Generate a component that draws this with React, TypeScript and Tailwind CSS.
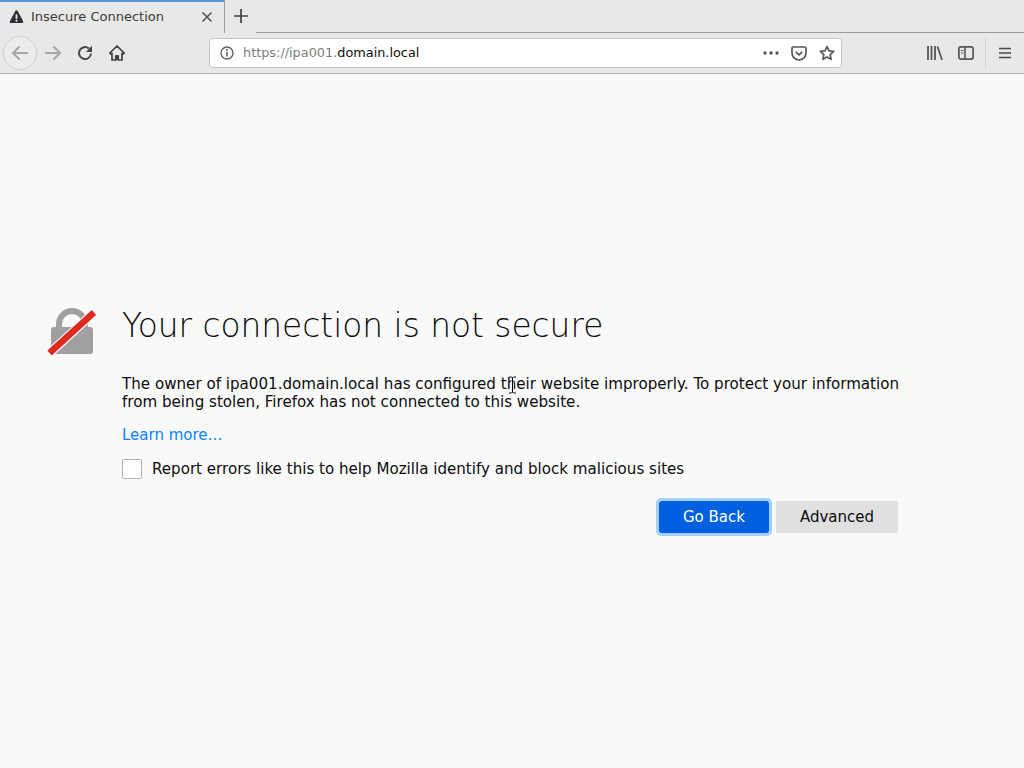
const font = "font-['DejaVu_Sans',sans-serif]"

function TabBar() {
  return (
    <div className="flex h-[33px] bg-[#e8e8e7]">
      <div className="flex w-[225px] h-[33px] items-center bg-[#e8e8e7] border-t-2 border-t-[#5b93d8] border-r border-r-[#9c9c9c] pl-[9px] pr-[11px] pb-[2px]">
        <svg width="15" height="15" viewBox="0 0 16 16" className="shrink-0">
          <path d="M8 1.200c-.6 0-1 .3-1.300.8L.9 13c-.5 1 .2 2 1.200 2h11.800c1 0 1.700-1 1.200-2L9.300 2C9 1.500 8.600 1.200 8 1.200z" fill="#2b2e33" />
          <rect x="7" y="5.500" width="2" height="5" rx=".6" fill="#e8e8e7" />
          <circle cx="8" cy="12.400" r="1.100" fill="#e8e8e7" />
        </svg>
        <span className="ml-[7px] text-[13px] text-[#3a3a3c] whitespace-nowrap">Insecure Connection</span>
        <svg width="12" height="12" viewBox="0 0 12 12" className="ml-auto">
          <path d="M1.500 1.500l9 9M10.500 1.500l-9 9" stroke="#55575a" strokeWidth="1.600" />
        </svg>
      </div>
      <div className="flex w-[31px] items-center justify-center pb-[2px]">
        <svg width="14" height="14" viewBox="0 0 14 14">
          <path d="M7 0v14M0 7h14" stroke="#3f4145" strokeWidth="1.700" />
        </svg>
      </div>
      <div className="flex-1 border-b border-b-[#9c9c9c]" />
    </div>
  )
}

function NavBar() {
  return (
    <div className="flex h-[41px] items-center bg-[#e8e8e7] border-b border-b-[#b5b5b5]">
      <div className="ml-[3px] flex h-[34px] w-[34px] items-center justify-center rounded-full border border-[#cfcfcf] bg-[#ececeb]">
        <svg width="18" height="16" viewBox="0 0 18 16">
          <path d="M17 8H2M8.500 1.500L2 8l6.500 6.500" fill="none" stroke="#a5a6a8" strokeWidth="2" />
        </svg>
      </div>
      <div className="ml-[7px] flex w-[18px] justify-center">
        <svg width="18" height="16" viewBox="0 0 18 16">
          <path d="M1 8h15M9.500 1.500L16 8l-6.500 6.500" fill="none" stroke="#a5a6a8" strokeWidth="2" />
        </svg>
      </div>
      <div className="ml-[15px] flex w-[16px] justify-center">
        <svg width="16" height="16" viewBox="0 0 16 16">
          <path d="M14 8.500A6 6 0 1 1 11.800 3.400" fill="none" stroke="#45474b" strokeWidth="2" />
          <path d="M15 .8v6.200H8.800z" fill="#45474b" />
        </svg>
      </div>
      <div className="ml-[16px] flex w-[16px] justify-center">
        <svg width="16" height="16" viewBox="0 0 16 16">
          <path d="M8 1L.8 8l1.200 1.200L3 8.300V15h3.800v-4h2.400v4H13V8.300l1 .9L15.200 8z" fill="none" stroke="#3f4145" strokeWidth="1.700" strokeLinejoin="round" />
          <rect x="6.500" y="10" width="3" height="5" fill="#3f4145" />
        </svg>
      </div>
      <div className="ml-[84px] flex h-[30px] w-[633px] items-center rounded-[4px] border border-[#c4c4c4] bg-white pl-[9px] pr-[6px]">
        <svg width="16" height="16" viewBox="0 0 16 16">
          <circle cx="8" cy="8" r="6" fill="none" stroke="#5f6165" strokeWidth="1.400" />
          <rect x="7.200" y="7" width="1.600" height="4.500" fill="#5f6165" />
          <circle cx="8" cy="5" r="1" fill="#5f6165" />
        </svg>
        <span className="ml-[8px] text-[12.850px] text-[#7c7c7f] whitespace-nowrap">
          https://ipa001.<span className="text-[#0c0c0d]">domain.local</span>
        </span>
        <div className="ml-auto flex items-center">
          <svg width="16" height="4" viewBox="0 0 16 4">
            <circle cx="2" cy="2" r="1.700" fill="#55575a" />
            <circle cx="8" cy="2" r="1.700" fill="#55575a" />
            <circle cx="14" cy="2" r="1.700" fill="#55575a" />
          </svg>
          <svg width="16" height="15" viewBox="0 0 16 15" className="ml-[12px]">
            <path d="M2.200 1h11.600c.7 0 1.200.5 1.200 1.200V7a7 7 0 0 1-14 0V2.200C1 1.500 1.500 1 2.200 1z" fill="none" stroke="#55575a" strokeWidth="1.700" />
            <path d="M4.800 5.800L8 8.800l3.200-3" fill="none" stroke="#55575a" strokeWidth="1.800" />
          </svg>
          <svg width="16" height="16" viewBox="0 0 16 16" className="ml-[12px]">
            <path d="M8 1.500l2 4.300 4.700.6-3.500 3.200.9 4.700L8 12l-4.100 2.300.9-4.700L1.300 6.400 6 5.800z" fill="none" stroke="#55575a" strokeWidth="1.700" strokeLinejoin="round" />
          </svg>
        </div>
      </div>
      <div className="ml-[85px] flex items-center">
        <svg width="16" height="14" viewBox="0 0 16 14">
          <path d="M1 0v14M4.500 0v14M8 0v14" stroke="#55575a" strokeWidth="1.800" />
          <path d="M10.500 .5L15 14" stroke="#55575a" strokeWidth="1.800" />
        </svg>
        <svg width="16" height="14" viewBox="0 0 16 14" className="ml-[15px]">
          <rect x=".9" y=".9" width="14.200" height="12.200" rx="2" fill="none" stroke="#55575a" strokeWidth="1.700" />
          <path d="M7 1v12" stroke="#55575a" strokeWidth="1.600" />
          <path d="M3 4.500h2.500M3 7h2.500" stroke="#55575a" strokeWidth="1" />
        </svg>
        <div className="ml-[11px] h-[32px] w-px bg-[#d2d2d2]" />
        <svg width="12" height="12" viewBox="0 0 12 12" className="ml-[13px]">
          <path d="M0 1.500h12M0 6h12M0 10.500h12" stroke="#45474b" strokeWidth="1.700" />
        </svg>
      </div>
    </div>
  )
}

function BrokenLock() {
  return (
    <svg width="50" height="50" viewBox="0 0 50 50" className="shrink-0">
      <path d="M10 20v-4a16 16 0 0 1 32 0v4h-6v-4a10 10 0 0 0-20 0v4z" fill="#a0a0a0" />
      <rect x="5" y="19" width="42" height="27" rx="3" fill="#a0a0a0" />
      <path d="M1 47.500L47 5.500" stroke="#f9f9fa" strokeWidth="9" />
      <path d="M3.500 45L48 4.500" stroke="#dc2a20" strokeWidth="6.500" />
    </svg>
  )
}

export default function App() {
  return (
    <div className={`relative h-[768px] w-[1024px] overflow-hidden bg-[#f9f9fa] ${font}`}>
      <TabBar />
      <NavBar />
      <main className="flex pl-[46px] pt-[233px]">
        <div className="pt-[1px]">
          <BrokenLock />
        </div>
        <div className="ml-[26px] w-[780px]">
          <h1 className="text-[32.800px] font-extralight leading-[38px] text-[#0c0c0d] whitespace-nowrap">Your connection is not secure</h1>
          <p className="mt-[30px] text-[15.120px] leading-[18px] text-[#0c0c0d]">
            The owner of ipa001.domain.local has configured their website improperly. To protect your information from being stolen, Firefox has not connected to this website.
          </p>
          <a className="mt-[15px] block text-[15px] leading-[18px] text-[#0a84ff]">Learn more…</a>
          <label className="mt-[15px] flex items-center">
            <span className="h-[20px] w-[20px] rounded-[2px] border border-[#b1b1b3] bg-white" />
            <span className="ml-[10px] text-[15.100px] leading-[18px] text-[#0c0c0d]">Report errors like this to help Mozilla identify and block malicious sites</span>
          </label>
          <div className="mt-[22px] mr-[4px] flex justify-end">
            <button className="h-[32px] w-[110px] rounded-[2px] bg-[#0060df] text-[15px] text-white outline-[3px] outline-offset-0 outline-[#a3cffc]">Go Back</button>
            <button className="ml-[7px] h-[32px] w-[122px] rounded-[2px] bg-[#e0e0e1] text-[15px] text-[#0c0c0d]">Advanced</button>
          </div>
        </div>
      </main>
      <svg width="9" height="18" viewBox="0 0 9 18" className="absolute left-[508px] top-[376px]">
        <path d="M1 1h2.500l1 1 1-1H8M4.500 2v14M1 17h2.500l1-1 1 1H8" fill="none" stroke="#fff" strokeWidth="2.200" opacity=".7" />
        <path d="M1 1h2.500l1 1 1-1H8M4.500 2v14M1 17h2.500l1-1 1 1H8" fill="none" stroke="#000" strokeWidth="1" />
      </svg>
    </div>
  )
}
